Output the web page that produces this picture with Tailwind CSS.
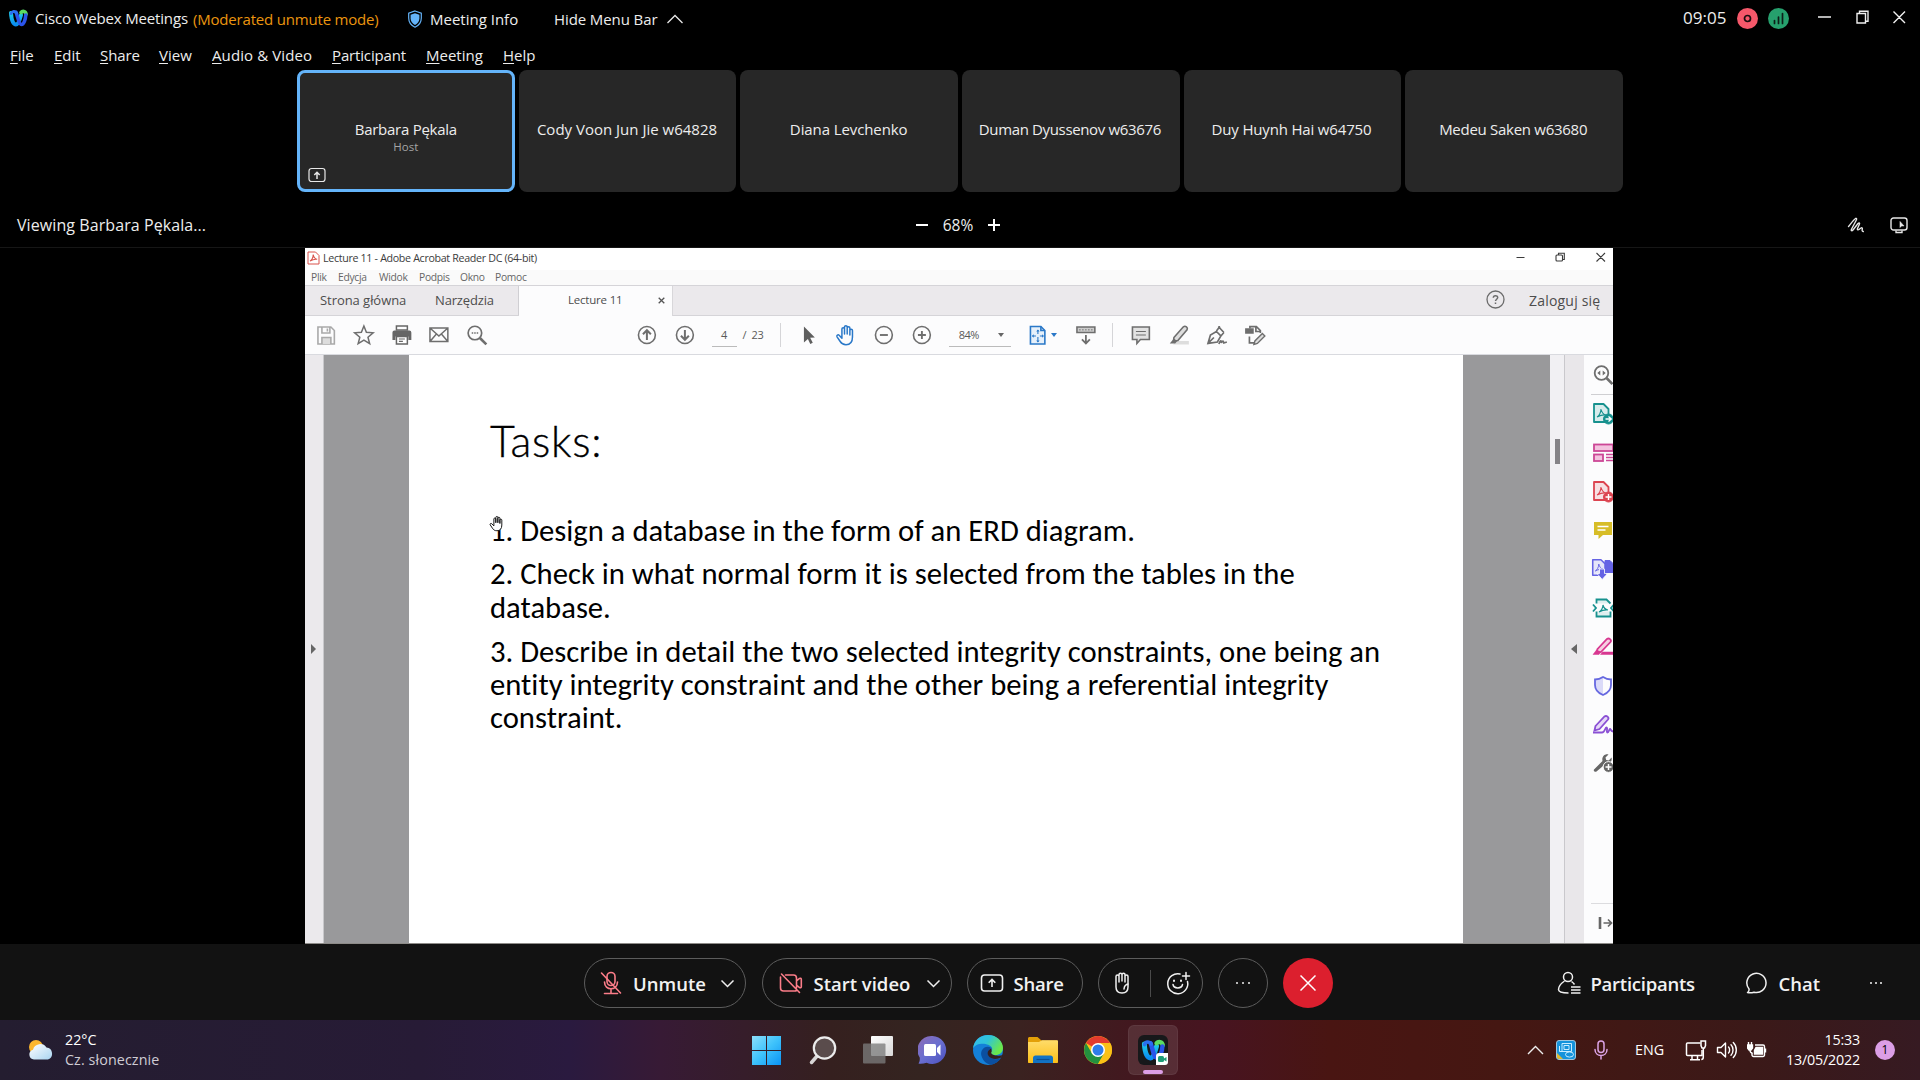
<!DOCTYPE html>
<html lang="en">
<head>
<meta charset="utf-8">
<title>Cisco Webex Meetings</title>
<script src="https://cdn.jsdelivr.net/npm/@tailwindcss/browser@4"></script>
</head>
<body class="w-[1920px] h-[1080px] overflow-hidden bg-black flex flex-col whitespace-nowrap font-['Open_Sans',sans-serif] text-[#ededed] text-[15px] leading-5">

<!-- shared symbols -->
<svg class="absolute w-0 h-0">
  <defs>
    <linearGradient id="wl" x1="0" y1="0" x2="0" y2="1"><stop offset="0" stop-color="#1fd0e8"/><stop offset="1" stop-color="#0a8cf0"/></linearGradient>
    <linearGradient id="win" gradientUnits="userSpaceOnUse" x1="0" y1="0" x2="29" y2="30"><stop offset="0" stop-color="#8fe0fb"/><stop offset=".5" stop-color="#3fc3fb"/><stop offset="1" stop-color="#0a93f5"/></linearGradient>
    <linearGradient id="tv" x1="0" y1="0" x2="1" y2="1"><stop offset="0" stop-color="#ffffff"/><stop offset="1" stop-color="#d8d8d8"/></linearGradient>
    <linearGradient id="chatg" x1="0" y1="0" x2="1" y2="1"><stop offset="0" stop-color="#8f6cb5"/><stop offset=".5" stop-color="#6a6fd0"/><stop offset="1" stop-color="#4a50bf"/></linearGradient>
    <linearGradient id="edge1" x1="0" y1="0" x2="1" y2=".5"><stop offset="0" stop-color="#35b8f0"/><stop offset=".5" stop-color="#2fc4d8"/><stop offset="1" stop-color="#6be84a"/></linearGradient>
    <linearGradient id="fold" x1="0" y1="0" x2="0" y2="1"><stop offset="0" stop-color="#ffdc6a"/><stop offset="1" stop-color="#fcbf18"/></linearGradient>
    <linearGradient id="cloud" x1="0" y1="0" x2="1" y2="1"><stop offset="0" stop-color="#ffffff"/><stop offset="1" stop-color="#a9d4f0"/></linearGradient>
    <symbol id="webex" viewBox="0 0 20 18">
      <path d="M2.500 4C3 12 5 15.500 7.500 15.500S11.500 10 12.500 6" fill="none" stroke="url(#wl)" stroke-width="4" stroke-linecap="round"/>
      <path d="M12.500 3.500C14 1.800 17 2 17.600 5" fill="none" stroke="#5bdc62" stroke-width="3.600" stroke-linecap="round"/>
      <path d="M7.600 3.500c1.500 3 2.400 12 5.400 12 2.400 0 4-5 4.300-9.500" fill="none" stroke="#2b54ea" stroke-width="3.600" stroke-linecap="round"/>
      <path d="M2.600 4.500c1-2.500 4-2.800 5.600-.5" fill="none" stroke="#2a6ff0" stroke-width="3" stroke-linecap="round"/>
    </symbol>
    <symbol id="hand" viewBox="0 0 20 22">
      <path d="M6.500 12V5a1.300 1.300 0 0 1 2.600 0v5V3a1.300 1.300 0 0 1 2.700 0v7-6a1.300 1.300 0 0 1 2.700 0v7V6.500a1.300 1.300 0 0 1 2.600 0V13c0 5-2.500 7.700-6.500 7.700-3 0-4.600-1.200-6-3.400L1.600 12.800c-.8-1.300 1-2.600 2.100-1.500l2.800 2.900z" stroke-linejoin="round"/>
    </symbol>
    <symbol id="doc" viewBox="0 0 22 22">
      <path d="M2 2h9.500l5 5v13H2z" fill-opacity=".15" stroke-width="1.800" stroke-linejoin="round"/>
      <path d="M5 15c2-.8 4-4.500 4-8 .6 3 2.500 5.500 5 6-3-.4-6 .5-9 2z" fill="none" stroke-width="1.100"/>
    </symbol>
  </defs>
</svg>

<!-- title bar -->
<header class="flex h-9 shrink-0 items-center pl-2">
  <svg class="w-[21px] h-[18px] shrink-0"><use href="#webex"/></svg>
  <div class="w-[159px] pl-[6px] tracking-[-0.16px]">Cisco Webex Meetings</div>
  <div class="w-[219px] pl-[5px] pt-[2px] text-[#eb960f] tracking-[-0.19px]">(Moderated unmute mode)</div>
  <svg class="w-4 h-[18px] mt-[2px]" viewBox="0 0 16 18"><path d="M8 1 14.300 3.200V8c0 4.500-2.500 7.500-6.300 9.200C4.200 15.500 1.700 12.500 1.700 8V3.200z" fill="none" stroke="#64b4fa" stroke-width="1.200"/><path d="M8 3.200 12.400 4.700V8.200c0 3.200-1.800 5.400-4.400 6.800-2.600-1.400-4.400-3.600-4.400-6.800V4.700z" fill="#64b4fa"/></svg>
  <div class="w-[131px] pl-[7px] pt-[2px]">Meeting Info</div>
  <div class="w-[112px] pt-[2px] tracking-[-0.1px]">Hide Menu Bar</div>
  <svg class="w-[18px] h-[10px] mt-[2px]" viewBox="0 0 18 10" fill="none" stroke="#e8e8e8" stroke-width="1.300"><path d="M1.500 9 9 1.500 16.500 9"/></svg>
  <div class="ml-auto w-[54px] text-[17px] mb-px">09:05</div>
  <svg class="w-[21px] h-[21px]" viewBox="0 0 21 21"><circle cx="10.500" cy="10.500" r="10.500" fill="#f5586a"/><circle cx="10.500" cy="10.500" r="3" fill="none" stroke="#1a0d0f" stroke-width="1.700"/></svg>
  <svg class="w-[21px] h-[21px] ml-[10px] mr-[28px]" viewBox="0 0 21 21"><circle cx="10.500" cy="10.500" r="10.500" fill="#26a06d"/><path d="M6.500 12.500v3M10.500 9v6.500M14.500 5.500v10" stroke="#0d1f18" stroke-width="1.700" stroke-linecap="round"/></svg>
  <svg class="w-[90px] h-[16px] mb-[2px] mr-[13px]" viewBox="0 0 90 16" fill="none" stroke="#f0f0f0" stroke-width="1.400"><path d="M1 8h13M43 4.500h-3v9.500h8.500v-9.500zM42.500 4.500v-2.300h8.500v10h-2.500M76.500 2.500 88 14M88 2.500 76.500 14"/></svg>
</header>

<!-- menu -->
<nav class="flex h-[34px] shrink-0 items-center pl-[10px] pt-[3px]">
  <div class="w-11"><u class="underline-offset-2">F</u>ile</div>
  <div class="w-[46px]"><u class="underline-offset-2">E</u>dit</div>
  <div class="w-[59px] tracking-[-0.1px]"><u class="underline-offset-2">S</u>hare</div>
  <div class="w-[53px]"><u class="underline-offset-2">V</u>iew</div>
  <div class="w-[120px] tracking-[0.1px]"><u class="underline-offset-2">A</u>udio &amp; Video</div>
  <div class="w-[94px] tracking-[-0.15px]"><u class="underline-offset-2">P</u>articipant</div>
  <div class="w-[77px]"><u class="underline-offset-2">M</u>eeting</div>
  <div><u class="underline-offset-2">H</u>elp</div>
</nav>

<!-- participants strip -->
<section class="grid grid-cols-6 gap-[4px] h-[122px] w-[1326px] ml-[297px] shrink-0 text-center">
  <div class="relative rounded-lg bg-[#272727] border-[3.500px] border-[#64b4fa] flex flex-col items-center pt-[46px]">
    <div class="tracking-[-0.26px]">Barbara Pękala</div>
    <div class="text-[11.500px] leading-4 text-[#a5a5a5]">Host</div>
    <svg class="absolute left-[8px] bottom-[6px] w-[18px] h-[16px]" viewBox="0 0 18 16" fill="none" stroke="#e8e8e8" stroke-width="1.200"><rect x="1" y="1.500" width="16" height="13" rx="2.500"/><path d="M9 12V5.500M6.300 8 9 5.300 11.700 8" stroke-width="1.500"/></svg>
  </div>
  <div class="rounded-lg bg-[#272727] pt-[49px] pr-px">Cody Voon Jun Jie w64828</div>
  <div class="rounded-lg bg-[#272727] pt-[49px] pr-px tracking-[-0.1px]">Diana Levchenko</div>
  <div class="rounded-lg bg-[#272727] pt-[49px] pr-[2px] tracking-[-0.35px]">Duman Dyussenov w63676</div>
  <div class="rounded-lg bg-[#272727] pt-[49px] pr-[2px] tracking-[-0.17px]">Duy Huynh Hai w64750</div>
  <div class="rounded-lg bg-[#272727] pt-[49px] pr-[2px] tracking-[-0.28px]">Medeu Saken w63680</div>
</section>

<!-- share status bar -->
<section class="flex h-[55px] shrink-0 items-center pl-[17px] pr-[12px] pt-[11px] text-base leading-6">
  <div class="w-[899px] tracking-[0.08px]">Viewing Barbara Pękala...</div>
  <svg class="w-3 h-3" viewBox="0 0 12 12"><path d="M0 6h12" stroke="#fff" stroke-width="2"/></svg>
  <div class="w-[60px] text-center text-[15.500px]">68%</div>
  <svg class="w-3 h-3" viewBox="0 0 12 12"><path d="M0 6h12M6 0v12" stroke="#fff" stroke-width="2"/></svg>
  <svg class="ml-auto w-[18px] h-[16px]" viewBox="0 0 18 16" fill="none" stroke="#e6e6e6" stroke-width="1.400" stroke-linecap="round" stroke-linejoin="round"><path d="M1.500 9.500C4 6.500 7 2.500 8.500 1.500c1.500-.6 1.200 1 .6 2L4.600 12c-1 2 .3 2.200 1.600.7L11 6.500c1.300-1.200 2-.2 1.300 1l-1.800 4c-.6 1.500.6 1.800 1.800.8l1.700-1.300c1-.6 1.600.2 1.300 1.200-.4 1.300-.3 2 1 2.300"/></svg>
  <svg class="ml-[25px] w-[18px] h-[17px]" viewBox="0 0 18 17" fill="none" stroke="#e6e6e6" stroke-width="1.400"><rect x="1" y="1" width="16" height="12" rx="2.500"/><path d="M6 13.500v2h6v-2"/><path d="M10 4.500v6l1.600-1.600h2.400z" fill="#e6e6e6" stroke-width=".6"/></svg>
</section>

<!-- shared screen -->
<main class="flex h-[697px] shrink-0 border-t border-[#161616] pl-[305px]">
  <div class="relative w-[1308px] h-[696px] overflow-hidden flex flex-col bg-white text-[#4d4d4d] border-b border-[#8d8b88]">
    <!-- window title -->
    <div class="flex h-[22px] shrink-0 items-center pl-[2px] bg-white">
      <svg class="w-[13px] h-[14px] -mt-[2px]" viewBox="0 0 13 14" fill="#fff" stroke="#d9534c"><path d="M1 1h7.500L12 4.500V13H1z"/><path d="M3 10c1.500-.6 3.300-3.500 3.200-6.500.5 2.500 1.800 4.500 4 4.800-2.500-.3-5 .4-7.200 1.700z" fill="none" stroke-width="1.100"/></svg>
      <div class="pl-[3px] text-[10.700px] tracking-[-0.33px] leading-4 text-[#3c3c3c] -mt-[2px]">Lecture 11 - Adobe Acrobat Reader DC (64-bit)</div>
      <svg class="ml-auto mr-[6px] w-[92px] h-[12px] -mt-[4px]" viewBox="0 0 92 12" fill="none" stroke="#3a3a3a" stroke-width="1.100"><path d="M1.500 6.500h8M81.500 2 90 10.500M90 2l-8.500 8.500M43.500 4V2.300h5.800v6.200h-1.700"/><rect x="41" y="4" width="6.500" height="6" rx="1"/></svg>
    </div>
    <div class="flex h-[15px] shrink-0 items-center pl-[6px] pb-[2px] bg-[#fafafa] text-[10.300px] tracking-[-0.3px] leading-3 text-[#666]">
      <div class="w-[27px]">Plik</div><div class="w-[41px]">Edycja</div><div class="w-[40px]">Widok</div><div class="w-[41px]">Podpis</div><div class="w-[35px]">Okno</div><div>Pomoc</div>
    </div>
    <!-- tabs -->
    <div class="flex h-[31px] shrink-0 items-stretch border-y border-[#d5d4d8] bg-[#ebe9ec] text-[13px] leading-[28px]">
      <div class="w-[130px] pl-[15px] tracking-[-0.05px]">Strona główna</div>
      <div class="w-[84px] tracking-[-0.15px] border-r border-[#d0cfd3]">Narzędzia</div>
      <div class="flex w-[154px] -mb-px bg-[#fcfcfd] border-r border-[#d8d7da]">
        <div class="ml-[49px] w-[90px] text-[11.500px] tracking-[-0.2px]">Lecture 11</div>
        <svg class="w-[7px] h-[7px] mt-[11px]" viewBox="0 0 7 7"><path d="M.7.7l5.600 5.600M6.300.7.700 6.300" stroke="#555" stroke-width="1.300"/></svg>
      </div>
      <svg class="w-[19px] h-[19px] mt-[4px] ml-auto mr-[24px]" viewBox="0 0 19 19" fill="none" stroke="#6b6b6b" stroke-width="1.300"><circle cx="9.500" cy="9.500" r="8.500"/><path d="M7.300 7.800c0-2.800 4.400-2.800 4.400-.2 0 1.600-2.200 1.700-2.200 3.500M9.500 12.500v1.500" stroke-width="1.500"/></svg>
      <div class="w-[84px] pt-[1px] text-[14px] tracking-[0.2px]">Zaloguj się</div>
    </div>
    <!-- toolbar -->
    <div class="flex h-[38px] shrink-0 items-center pl-[2px] bg-[#fcfcfd] text-[11px] text-[#5a5a5a] [&_svg]:h-[22px] [&_svg]:w-[37.8px] [&_svg]:shrink-0">
      <svg viewBox="-8 0 38 22" fill="none" stroke="#a9a9a9" stroke-width="1.600"><path d="M3 3h13l3.500 3.500V20H3zM7 3v6h8V3M12.500 4.500v3"/><path d="M7 20v-6.500h9V20" fill="#ddd"/></svg>
      <svg viewBox="-8 0 38 22" fill="none" stroke="#6e6e6e" stroke-width="1.500"><path d="M11 2l2.500 6.300 6.800.5-5.200 4.400 1.700 6.600L11 16.200l-5.800 3.600 1.700-6.600L1.700 8.800l6.800-.5z"/></svg>
      <svg viewBox="-8 0 38 22" fill="#666"><path d="M5.500 2h11v4h-11z" fill="none" stroke="#666" stroke-width="1.500"/><path d="M3.500 6.500h15A2 2 0 0 1 20.500 8.500V16h-3v-3.500h-13V16h-3V8.500a2 2 0 0 1 2-2z"/><path d="M5.500 12.500h11V20h-11z" fill="#fff" stroke="#666" stroke-width="1.500"/><path d="M8 15h6M8 17.500h4" stroke="#666" stroke-width="1.200"/></svg>
      <svg viewBox="-8 0 38 22" fill="none" stroke="#6e6e6e" stroke-width="1.500"><path d="M2 4h18v13.500H2zM2 4l9 8 9-8M2 17.500 8.500 10M20 17.500 13.500 10"/></svg>
      <svg viewBox="-8 0 38 22" fill="none" stroke="#6e6e6e" stroke-width="1.700"><circle cx="9" cy="9" r="6.800"/><path d="M14 14l6.500 6.500" stroke-width="2.600"/><path d="M5.800 9h1.500M8.300 9h1.500M10.800 9h1.500"/></svg>
      <div class="w-[132px]"></div>
      <svg viewBox="-8 0 38 22" fill="none" stroke="#6e6e6e" stroke-width="1.600"><circle cx="11" cy="11" r="8.500"/><path d="M11 16V6.500M7 10.200l4-4 4 4" stroke-width="2"/></svg>
      <svg viewBox="-8 0 38 22" fill="none" stroke="#6e6e6e" stroke-width="1.600"><circle cx="11" cy="11" r="8.500"/><path d="M11 6v9.500M7 11.800l4 4 4-4" stroke-width="2"/></svg>
      <div class="ml-[8px] w-[25px] h-6 leading-[23px] text-center border-b border-[#bbb]">4</div>
      <div class="w-[43px] pl-[6px] tracking-[-0.3px]">/&nbsp; 23</div>
      <div class="w-px h-6 bg-[#d5d5d8] mr-[9px]"></div>
      <svg viewBox="-8 0 38 22" fill="#5f5f5f"><path d="M6 2.500 17 13.500l-4.700.3 2.600 5-2.500 1.200-2.400-5-4 3.600z"/></svg>
      <svg viewBox="-8 0 38 22" fill="none" stroke="#2a78c8" stroke-width="1.500"><use href="#hand" width="21" height="22"/></svg>
      <svg viewBox="-8 0 38 22" fill="none" stroke="#6e6e6e" stroke-width="1.600"><circle cx="11" cy="11" r="8.500"/><path d="M7 11h8" stroke-width="1.900"/></svg>
      <svg viewBox="-8 0 38 22" fill="none" stroke="#6e6e6e" stroke-width="1.600"><circle cx="11" cy="11" r="8.500"/><path d="M7 11h8M11 7v8" stroke-width="1.900"/></svg>
      <div class="flex ml-[8px] w-[62px] h-6 leading-[23px] pl-[10px] border-b border-[#bbb] tracking-[-0.5px]">84%<i class="ml-auto mr-[7px] mt-[10px] h-0 w-0 border-x-[3px] border-t-[4px] border-x-transparent border-t-[#666]"></i></div>
      <svg class="ml-[8px]" viewBox="-8 0 38 22" fill="none" stroke="#2a78c8" stroke-width="1.600"><path d="M3.500 2.500h10.500l4 4V20h-14.500z" fill="#e6f0fa"/><path d="M14 2.500v4h4" /><path d="M11 6v4M11 13v5M5.500 12h3.500M13 12h3.500" stroke-width="1.100"/><path d="M9.300 7.500 11 5.500l1.700 2zM9.300 16.500 11 18.500l1.700-2zM6.800 10.300 5 12l1.800 1.700zM15.200 10.300 17 12l-1.800 1.700z" fill="#2a78c8" stroke="none"/></svg>
      <i class="-ml-[6px] mr-[10px] h-0 w-0 border-x-[3px] border-t-[4px] border-x-transparent border-t-[#2a78c8]"></i>
      <svg viewBox="-8 0 38 22" fill="none" stroke="#6e6e6e" stroke-width="1.600"><path d="M2 3h18v5.500H2z" fill="#ccc"/><path d="M5 5v1.500M8 5v1.500M11 5v1.500M14 5v1.500M17 5v1.500" stroke-width="1"/><path d="M11 11v8M7 15.500l4 4 4-4" stroke-width="1.800"/></svg>
      <div class="w-px h-6 bg-[#d5d5d8] ml-[8px] mr-[9px]"></div>
      <svg viewBox="-8 0 38 22" fill="#e2e2e2" stroke="#6e6e6e" stroke-width="1.600"><path d="M2.500 3h17v12.500h-9l-3.500 4v-4H2.500z"/><path d="M6 7.500h10M6 11h10" stroke-width="1.200"/></svg>
      <svg viewBox="-8 0 38 22" fill="#ddd" stroke="#6e6e6e" stroke-width="1.600"><path d="M9 17h12v3.500H5z" stroke="none"/><path d="M6 13.500 15.500 2.800c2-1.500 5 .7 3.700 3L10 16.500l-4.500.7z"/><path d="M6 14.500 1.800 19.500h5.500l2-2.500z" fill="#6e6e6e" stroke="none"/></svg>
      <svg viewBox="-8 0 38 22" fill="none" stroke="#6e6e6e" stroke-width="1.700"><path d="M2 19.500 4.500 11l6-3.500 4.500 4.500-3.500 6zM2.500 19 8 13.500M10.500 7l3.500-4.500M15 12l3-3.500M12.500 2.500l5.500 6"/><path d="M13 20c1.500-4 2.500-4 2.500-1 1.500-3 2-2 2.500 0l3-1"/></svg>
      <svg viewBox="-8 0 38 22" fill="none" stroke="#6e6e6e" stroke-width="1.700"><path d="M6 4.500V2.500h6.500l4 4V9M5.500 12.500V19h5M12 2.500v5h5"/><path d="M2 5h7v4H2z" fill="#6e6e6e"/><path d="M10 20.500l1-3.500 7.500-7.500 2.500 2.500-7.500 7.500z" fill="#ddd" stroke-width="1.400"/></svg>
    </div>
    <!-- document area -->
    <div class="relative flex h-[589px] shrink-0 border-t border-[#d9dadf]">
      <div class="w-[19px] bg-[#ebe9ec] flex items-center border-r border-[#c8c8cb]"><i class="ml-[6px] h-0 w-0 border-y-[5px] border-l-[5px] border-y-transparent border-l-[#666]"></i></div>
      <div class="w-[85px] bg-[#99999b]"></div>
      <article class="relative w-[1054px] bg-white pl-[82px] text-black">
        <h1 class="pt-[54px] font-['Lato',sans-serif] font-light text-[43px] leading-[64px] tracking-[0.7px] -ml-px [-webkit-text-stroke:0.35px_black]">Tasks:</h1>
        <div class="pt-[41px] -ml-px font-['Carlito','Lato',sans-serif] text-[30.660px] leading-[33.300px] [font-variant-ligatures:none]">
          <p>1. Design a database in the form of an ERD diagram.</p>
          <p class="pt-[10px]">2. Check in what normal form it is selected from the tables in the<br>database.</p>
          <p class="pt-[11px]">3. Describe in detail the two selected integrity constraints, one being an<br>entity integrity constraint and the other being a referential integrity<br>constraint.</p>
        </div>
        <svg class="absolute left-[80px] top-[160px] w-[15px] h-[17px]" viewBox="0 0 20 22" fill="#fff" stroke="#111" stroke-width="1.300"><use href="#hand"/></svg>
      </article>
      <div class="w-[87px] bg-[#99999b]"></div>
      <div class="w-[15px] bg-[#f1f0f3] border-r border-[#c9c8cc] pl-[5px] pt-[84px]"><div class="w-[5px] h-[25px] bg-[#858387]"></div></div>
      <div class="w-[19px] bg-[#e9e7ea] flex items-center"><i class="ml-[6px] h-0 w-0 border-y-[5px] border-r-[6px] border-y-transparent border-r-[#666]"></i></div>
      <aside class="w-[29px] overflow-hidden bg-[#fcfcfd] pl-[7px] flex flex-col [&_svg]:w-[24px] [&_svg]:h-[24px] [&_svg]:shrink-0 [&_svg]:overflow-visible">
        <svg class="mt-[7px]" viewBox="0 0 24 24" fill="none" stroke="#6e6e6e" stroke-width="1.800"><circle cx="10.500" cy="11" r="6.800"/><path d="M15.500 16l6 6" stroke-width="2.600"/><path d="M6.300 11 9.300 8.500v5zM14.700 11l-3-2.500v5z" fill="#6e6e6e" stroke="none"/></svg>
        <div class="h-px shrink-0 bg-[#cfcfd2] mt-[8px] mb-[7px]"></div>
        <div class="flex flex-col gap-[14.800px]">
          <svg viewBox="0 0 24 24" fill="#17918e" stroke="#17918e"><use href="#doc" width="22" height="22" x="1"/><circle cx="17.500" cy="17" r="5"/><path d="M14.500 17h5.500M17.500 14.500 20.300 17l-2.800 2.500" stroke="#fff" fill="none" stroke-width="1.300"/></svg>
          <svg viewBox="0 0 24 24" fill="#f3c3df" stroke="#cc4796" stroke-width="1.800"><rect x="3" y="3.500" width="19" height="6.500"/><rect x="3" y="13.500" width="9" height="6.500"/><path d="M15 13.500h8M15 16.500h8M15 19.500h8" stroke-width="1.300"/></svg>
          <svg viewBox="0 0 24 24" fill="#dc4450" stroke="#dc4450"><use href="#doc" width="22" height="22" x="1"/><circle cx="17.500" cy="17" r="5"/><path d="M14.500 17h6M17.500 14v6" stroke="#fff" fill="none" stroke-width="1.400"/></svg>
          <svg viewBox="0 0 24 24" fill="#d7bd27"><path d="M3 4h18v13h-9l-4.500 4v-4H3z"/><path d="M6.500 8.500h11M6.500 12h8" stroke="#fff" stroke-width="1.500"/></svg>
          <svg viewBox="0 0 24 24" fill="#6563e4" stroke="#6563e4"><use href="#doc" width="19" height="19" x="0" y="1"/><path d="M14 3.500h5l4 4v8h-9z"/><path d="M8.500 12h5v4.500h3l-5.300 6-5.200-6h2.500z" stroke="#fff" stroke-width=".8"/></svg>
          <svg viewBox="0 0 24 24" fill="none" stroke="#17918e" stroke-width="1.800"><path d="M5.500 7.500V3.500h10l4 4M5.500 15.500v5h14v-5" fill="#17918e" fill-opacity=".12"/><path d="M2 8.500 5 12l-3 3.500M23 8.500 20 12l3 3.500"/><path d="M8 16c2-.8 4-4 4-7 .6 2.700 2.500 4.500 5 5-3-.3-6 .4-9 2z" stroke-width="1.200"/></svg>
          <svg viewBox="0 0 24 24" fill="#f6cfe1" stroke="#d83790" stroke-width="1.800"><path d="M6.500 14 16 4c2-1.500 5 1 3.500 3L10 17l-4.500.5z"/><path d="M5.500 15 2 19.500h6l2-2.500zM11.500 17H22v2.500H9.500z" fill="#d83790" stroke-width=".5"/></svg>
          <svg viewBox="0 0 24 24" fill="#fff" stroke="#6668e0" stroke-width="1.800"><path d="M12 3v18c-5-2-8-6-8-10V5.500c3 0 5-1 8-2.500z" fill="#dadaf8" stroke="none"/><path d="M12 3c2.500 1.700 5 2.500 8 2.500V11c0 4.500-3 8-8 10-5-2-8-5.500-8-10V5.500c3 0 5.500-.8 8-2.500z" fill="none"/></svg>
          <svg viewBox="0 0 24 24" fill="#e6d8f7" stroke="#8a50d4" stroke-width="1.800"><path d="M4.500 14 13.500 4.500c2-1.500 5 1 3.500 3L8.500 17l-5 1.500z"/><path d="M2 20.500h9c3 0 3-5 4.500-5s-.5 5 1 5 1.500-3.500 2.500-3.500.5 2.500 3.500 2.500" fill="none"/></svg>
          <svg viewBox="0 0 24 24" fill="#666"><path d="M3 18.500 11.500 10C10.500 6 13.500 2.500 17.500 3.500l-3 3 .7 2.500 2.600.5 2.700-3c1 3-1 6.500-5.500 6L5.500 20.500C4 21.500 2 20 3 18.500z"/><circle cx="17.500" cy="16" r="5.400" stroke="#fff"/><path d="M14.500 16h6M17.500 13v6" stroke="#fff" stroke-width="1.500"/></svg>
        </div>
        <div class="h-px shrink-0 bg-[#dcdcdf] mt-auto mb-[7px]"></div>
        <svg class="mb-[8px]" viewBox="0 0 24 24" fill="none" stroke="#666" stroke-width="1.700"><path d="M9 6v12" stroke-width="2.600"/><path d="M12.500 12H20M17 8.500l3.500 3.500L17 15.500"/></svg>
      </aside>
    </div>
  </div>
</main>

<!-- meeting controls -->
<footer class="flex h-[76px] shrink-0 items-center bg-[#121212] pl-[584px] pt-[2px] text-[18.500px] font-semibold leading-6 text-[#f2f2f2]">
  <div class="flex items-center shrink-0 w-[162px] h-[50px] rounded-full border border-[#5c5c5c] pl-[14px] pr-[10px]">
    <svg class="w-[24px] h-[26px] shrink-0" viewBox="0 0 24 26" fill="none" stroke="#fb7d89" stroke-width="1.600" stroke-linecap="round"><rect x="8" y="2.500" width="8" height="13" rx="4"/><path d="M5.500 12c0 9 13 9 13 0M12 19v4M5.500 23.500h13M2.500 3l19 20"/></svg>
    <div class="pl-[10px] pt-[2px]">Unmute</div>
    <svg class="ml-auto w-[15px] h-[9px] shrink-0" viewBox="0 0 15 9" fill="none" stroke="#eee" stroke-width="1.500"><path d="M1.500 1.500 7.500 7.500 13.500 1.500"/></svg>
  </div>
  <div class="flex items-center shrink-0 ml-[15.500px] w-[190px] h-[50px] rounded-full border border-[#5c5c5c] pl-[15px] pr-[10px]">
    <svg class="w-[26px] h-[24px] shrink-0" viewBox="0 0 26 24" fill="none" stroke="#fb7d89" stroke-width="1.600" stroke-linecap="round"><path d="M7.500 4h8a3 3 0 0 1 3 3v10M18.500 19.500a3 3 0 0 1-1.500.5h-11.500a3 3 0 0 1-3-3V6M18.500 10l3-2.500c1-.6 1.800-.3 1.800.7v7.600c0 1-.8 1.300-1.800.7l-3-2.500M3.500 3l18 18.500"/></svg>
    <div class="pl-[10px] pt-[2px]">Start video</div>
    <svg class="ml-auto w-[15px] h-[9px] shrink-0" viewBox="0 0 15 9" fill="none" stroke="#eee" stroke-width="1.500"><path d="M1.500 1.500 7.500 7.500 13.500 1.500"/></svg>
  </div>
  <div class="flex items-center ml-[15px] w-[116px] h-[50px] rounded-full border border-[#5c5c5c] pl-[12px]">
    <svg class="w-[24px] h-[20px]" viewBox="0 0 24 20" fill="none" stroke="#f0f0f0" stroke-width="1.600"><rect x="1.500" y="2" width="21" height="16" rx="3"/><path d="M12 14V7M8.700 9.800 12 6.500l3.300 3.300"/></svg>
    <div class="pl-[10px] pt-[2px] tracking-[-0.2px]">Share</div>
  </div>
  <div class="flex items-center ml-[15px] w-[105px] h-[50px] rounded-full border border-[#5c5c5c] pl-[12px]">
    <svg class="w-[22px] h-[24px]" viewBox="0 0 22 24" fill="none" stroke="#f0f0f0" stroke-width="1.500" stroke-linecap="round"><path d="M5 13V5.500a1.500 1.500 0 0 1 3 0V11M8 10V3.700a1.500 1.500 0 0 1 3 0V10M11 10V3.700a1.500 1.500 0 0 1 3 0V11M14 10V5.500a1.500 1.500 0 0 1 3 0V16c0 4-2.300 6-6 6s-6-2-6-6v-3M17.300 13c-3 .3-4 2-4.300 5"/></svg>
    <div class="w-px h-[27px] bg-[#4a4a4a] ml-[17px] mr-[14px]"></div>
    <svg class="w-[26px] h-[24px]" viewBox="0 0 26 24" fill="none" stroke="#f0f0f0" stroke-width="1.500" stroke-linecap="round"><path d="M15 3a10 10 0 1 0 7.500 7.500"/><path d="M8 13.500c.8 4.500 8.700 4.500 9.500 0M21 1.500v7M17.500 5h7"/><path d="M9 9.500v.5M16 9.500v.5" stroke-width="2"/></svg>
  </div>
  <div class="flex items-center justify-center gap-[4px] ml-[15px] w-[50px] h-[50px] rounded-full border border-[#5c5c5c]"><i class="w-[2px] h-[2px] rounded-full bg-[#eee]"></i><i class="w-[2px] h-[2px] rounded-full bg-[#eee]"></i><i class="w-[2px] h-[2px] rounded-full bg-[#eee]"></i></div>
  <div class="flex items-center justify-center ml-[15px] w-[50px] h-[50px] rounded-full bg-[#dc1f2e]"><svg class="w-4 h-4" viewBox="0 0 16 16" stroke="#fff" stroke-width="1.500"><path d="M.5.500l15 15M15.500.500l-15 15"/></svg></div>
  <svg class="ml-[224px] w-[24px] h-[24px]" viewBox="0 0 24 24" fill="none" stroke="#f0f0f0" stroke-width="1.500"><circle cx="11" cy="6" r="4.500"/><path d="M11.500 22C5 22 1.500 21 1.500 18.500c0-3.500 2.500-6 6-8.500M14.500 10.500c1 .8 2 1.500 3 3M14 16h9.500M14 19h9.500M14 22h9.500"/></svg>
  <div class="w-[165px] pl-[10px] pt-[2px] tracking-[-0.25px]">Participants</div>
  <svg class="w-[22px] h-[24px]" viewBox="0 0 22 24" fill="none" stroke="#f0f0f0" stroke-width="1.500" stroke-linejoin="round"><path d="M1.500 21.500c1.500-1 1.800-2 1.500-3.500A9.600 9.600 0 1 1 8 21.200c-2 .6-4 .9-6.500.3z"/></svg>
  <div class="w-[102px] pl-[11px] pt-[2px]">Chat</div>
  <div class="flex gap-[3px]"><i class="w-[2px] h-[2px] bg-[#bbb]"></i><i class="w-[2px] h-[2px] bg-[#bbb]"></i><i class="w-[2px] h-[2px] bg-[#bbb]"></i></div>
</footer>

<!-- taskbar -->
<footer class="flex h-[60px] shrink-0 items-center text-[14.300px] leading-5 text-white bg-[linear-gradient(90deg,#241d30_0px,#271b36_420px,#2a1a3f_570px,#371a35_660px,#35201f_830px,#342420_920px,#3a2220_1020px,#42181f_1130px,#471420_1220px,#491512_1330px,#451712_1500px,#3b1918_1750px,#361a22_1920px)]">
  <svg class="ml-7 w-[27px] h-[24px] shrink-0" viewBox="0 0 27 24"><circle cx="8" cy="9" r="7" fill="#fbb62c"/><path d="M6 21.500a5 5 0 0 1-1-9.800 7.500 7.500 0 0 1 13.500-2.200A6.200 6.200 0 0 1 20 21.500z" fill="url(#cloud)"/></svg>
  <div class="w-[697px] shrink-0 pl-[10px]">
    <div>22°C</div>
    <div class="text-[#cfccd4] tracking-[0.1px]">Cz. słonecznie</div>
  </div>
  <div class="flex items-center shrink-0 w-[424px] [&>svg]:shrink-0">
    <svg class="w-[29px] h-[30px]" viewBox="0 0 29 30"><path d="M0 1h14v14H0zM15 1h14v14H15zM0 16h14v14H0zM15 16h14v14H15z" fill="url(#win)"/></svg>
    <svg class="ml-[28px] w-[28px] h-[30px]" viewBox="0 0 28 30"><path d="M9 20l-6.500 7.500" stroke="#d8d6d6" stroke-width="3.500" stroke-linecap="round"/><circle cx="15.500" cy="13" r="10.700" fill="#5a4c4c" stroke="#ececec" stroke-width="2.200"/></svg>
    <svg class="ml-[26px] w-[30px] h-[30px]" viewBox="0 0 30 30"><rect x="8" y="1" width="22" height="20" rx="1" fill="url(#tv)"/><rect x="0" y="8.500" width="22.500" height="20" rx="1" fill="#7b7b7b" fill-opacity=".78"/></svg>
    <svg class="ml-[25px] w-[29px] h-[30px]" viewBox="0 0 29 30"><path d="M14.500 1a14 14 0 1 1-6 26.800C6 28.500 3 29 .5 28.500c1-1.500 1.500-3 1.200-6A14 14 0 0 1 14.500 1z" fill="url(#chatg)"/><rect x="6" y="9" width="12" height="12" rx="1.500" fill="#fff"/><path d="M19 13l3.500-3.500v11L19 17z" fill="#fff"/></svg>
    <svg class="ml-[26px] w-[30px] h-[30px]" viewBox="0 0 30 30"><circle cx="15" cy="15" r="15" fill="#1480d8"/><path d="M0 13.500C1 5 7.500 0 15 0c9 0 15 6.500 15 13 0 4.500-3.500 7-7.500 7-4 0-5.500-1.800-4.200-3.500 1-1.300 1.200-2.500.5-4C17 8.500 4 6 0 13.500z" fill="url(#edge1)"/><path d="M18.500 13c-6-4-12 2-10 8 1.500 5 6 9 10.500 8.700 4-1.200 7-3.700 9-6.700-5 2.500-10 1.200-12-2.500-1.500-3-.3-6 2.500-7.500z" fill="#0b4fa0"/><path d="M18.300 13.500c-3 1.200-4.500 4-3 7 2 3.700 7.500 4.500 12.500 2.200l2.200-2.700c-3 1-7.500 1-10.500-.5-1.500-1-1.500-2-.8-3z" fill="#36201e"/></svg>
    <svg class="ml-[25px] w-[30px] h-[28px]" viewBox="0 0 30 28"><path d="M0 2.500C0 1.700.7 1 1.500 1h8l4 3.500H29V12H0z" fill="#e3a008"/><path d="M0 6h11l3-1.700h15c.6 0 1 .4 1 1V26c0 .6-.4 1-1 1H1c-.6 0-1-.4-1-1z" fill="url(#fold)"/><path d="M5 27v-5c0-1.500 1-2.500 2.500-2.500h15c1.500 0 2.500 1 2.500 2.500v5z" fill="#1273c4"/><path d="M8.500 23.500h13" stroke="#0a4f94" stroke-width="1.200"/></svg>
    <svg class="ml-[26px] w-[28px] h-[28px]" viewBox="0 0 28 28"><circle cx="14" cy="14" r="14" fill="#fbc116"/><path d="M14 14 1.900 7A14 14 0 0 1 26.100 7z" fill="#e33b2e"/><path d="M1.900 7A14 14 0 0 0 14 28l6-10.500L14 14 8 17.500z" fill="#23913f"/><path d="M14 7h12.100A14 14 0 0 1 14 28l6.200-10.500z" fill="#fbc116"/><circle cx="14" cy="14" r="7" fill="#fff"/><circle cx="14" cy="14" r="5.500" fill="#2f7de9"/></svg>
    <div class="relative ml-[16px] w-[50px] h-[50px] shrink-0 rounded-md bg-white/10 border border-white/5 flex justify-center pt-[9px]">
      <div class="relative w-[30px] h-[30px] rounded-md bg-[#17181a] flex items-center justify-center"><svg class="w-[27px] h-[22px]"><use href="#webex"/></svg>
        <svg class="absolute right-0 bottom-0 w-[12px] h-[12px]" viewBox="0 0 12 12"><path d="M3 0h9v9a3 3 0 0 1-3 3H0V3a3 3 0 0 1 3-3z" fill="#fff"/><rect x="2" y="3" width="6" height="6" rx="1.500" fill="#1e9c77"/><path d="M8 5.500l2.500-1.500v4.500L8 7z" fill="#1e9c77"/></svg></div>
      <div class="absolute bottom-0 left-[14px] w-5 h-1 rounded-full bg-[#dc9ee6]"></div>
    </div>
  </div>
  <svg class="ml-auto w-[17px] h-[10px]" viewBox="0 0 17 10" fill="none" stroke="#eee" stroke-width="1.400"><path d="M1 9 8.500 1.500 16 9"/></svg>
  <svg class="ml-[12px] w-[20px] h-[20px]" viewBox="0 0 20 20" fill="none"><rect x=".5" y=".5" width="19" height="19" rx="2.500" fill="#1593dc" stroke="#9fc7df"/><path d="M1 13l6 6H2.500L1 17.500z" fill="#e0b832"/><path d="M6 3.500h9.500v8H6zM3.500 6v5.500H6M8 5.500h5v4H8z" stroke="#c9ecff"/><ellipse cx="13.500" cy="14.500" rx="4" ry="2.600" stroke="#c9ecff"/></svg>
  <svg class="ml-[18px] w-[14px] h-[20px]" viewBox="0 0 14 20" fill="none" stroke="#dca4e6" stroke-width="1.500" stroke-linecap="round"><rect x="4" y="1" width="6" height="11.500" rx="3"/><path d="M1 9.500c0 8 12 8 12 0M7 15.500V19"/></svg>
  <div class="ml-[27px] w-[50px] text-[14.300px]">ENG</div>
  <svg class="w-[22px] h-[21px]" viewBox="0 0 22 21" fill="none" stroke="#fff" stroke-width="1.500"><path d="M15.500 3H2.500a1 1 0 0 0-1 1v10.500a1 1 0 0 0 1 1H17V10M7 15.500v4M12.500 15.500v4M5 19.700h10"/><path d="M16 1h4.500v4.500L19.500 8h-2.500L16 5.500z"/><path d="M18.300 8v9c0 1.500-1 2.500-2 2.500"/></svg>
  <svg class="ml-[9px] w-[21px] h-[18px]" viewBox="0 0 21 18" fill="none" stroke="#fff" stroke-width="1.400" stroke-linecap="round" stroke-linejoin="round"><path d="M1.500 6.500H5L9.500 2v14L5 11.500H1.500zM12.500 6c1.500 1.500 1.500 4.500 0 6M15 3.800c2.700 2.700 2.700 7.700 0 10.400M17.300 1.500c4 4 4 11 0 15"/></svg>
  <svg class="ml-[10px] w-[20px] h-[18px]" viewBox="0 0 20 18" fill="none" stroke="#fff" stroke-width="1.400"><path d="M8 4h8a1.500 1.500 0 0 1 1.500 1.500v8.500a1.500 1.500 0 0 1-1.500 1.500H6.500a1.500 1.500 0 0 1-1.500-1.500V12"/><path d="M9 6.500h6.500v6.500H7.500V9.500z" fill="#fff"/><path d="M18.500 7.500v4M1.500 1v3M4.500 1v3M3 9c0 2 .8 3 2.500 3"/><path d="M.5 4h5v3l-1.500 2H2L.5 7z" fill="#fff"/></svg>
  <div class="w-[93px] text-right pb-px text-[14.300px] tracking-[-0.2px]"><div>15:33</div><div>13/05/2022</div></div>
  <div class="ml-[15px] mr-[25px] w-5 h-5 rounded-full bg-[#dc9ee6] text-black text-[12px] text-center">1</div>
</footer>
</body>
</html>
